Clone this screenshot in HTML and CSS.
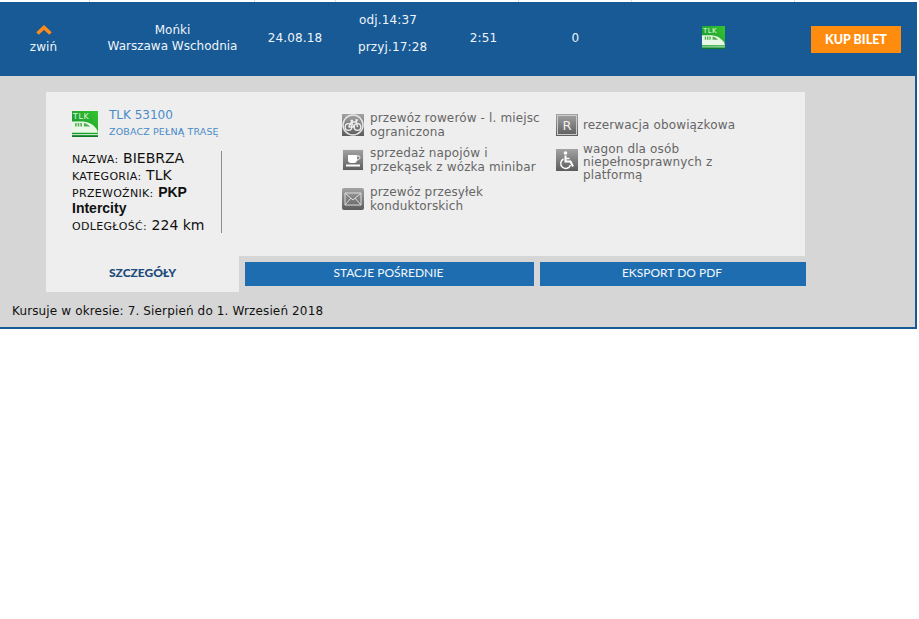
FILE: index.html
```html
<!DOCTYPE html>
<html lang="pl">
<head>
<meta charset="utf-8">
<title>Połączenie</title>
<link rel="stylesheet" href="styles.css">
</head>
<body>
<svg class="defs" width="0" height="0" aria-hidden="true">
  <defs>
    <linearGradient id="grey" x1="0" y1="0" x2="0" y2="1"><stop offset="0" stop-color="#a3a3a3"/><stop offset="1" stop-color="#5c5c5c"/></linearGradient>
    <linearGradient id="green" x1="1" y1="0" x2="0" y2="1"><stop offset="0" stop-color="#35c52f"/><stop offset="1" stop-color="#0f8f2e"/></linearGradient>
    <symbol id="tlk" viewBox="0 0 25 25">
      <rect width="25" height="25" fill="url(#green)"/>
      <text x="1" y="7.500" class="tlk-text">TLK</text>
      <path d="M0 10h10c6 0 12 4 14 8l1 3H0z" fill="#e9f7e6"/>
      <path d="M3 11.500h1.500v3.500H3zM5.500 11.500H7v3.500H5.500zM8 11.500h1.500v3.500H8z" fill="#4fb04f"/>
      <path d="M11.500 11.500c2.500 .5 4.500 2 6 3.500h-6z" fill="#4fb04f"/>
      <rect y="22.300" width="25" height="1.100" fill="#e9f7e6"/>
      <rect y="23.500" width="25" height="1.500" fill="#0c7a28"/>
    </symbol>
  </defs>
</svg>
<main class="connection">
  <div class="ticks"><i></i><i></i><i></i><i></i><i></i><i></i><i></i></div>
  <header class="summary">
    <div class="cell toggle">
      <svg class="chevron" width="16" height="11" viewBox="0 0 16 11"><path d="M1.500 8.500 8 2.500l6.500 6" fill="none" stroke="#ff8c1a" stroke-width="3.600"/></svg>
      <span>zwiń</span>
    </div>
    <div class="cell route"><span>Mońki</span><span>Warszawa Wschodnia</span></div>
    <div class="cell date">24.08.18</div>
    <div class="cell times"><span class="dep">odj.14:37</span><span>przyj.17:28</span></div>
    <div class="cell duration">2:51</div>
    <div class="cell zero">0</div>
    <div class="cell train-cell"><svg class="train-small"><use href="#tlk"/></svg></div>
    <div class="cell buy"><a class="buy-btn" href="#">KUP BILET</a></div>
  </header>
  <section class="details">
    <div class="panel">
      <div class="info">
        <div class="train-head">
          <svg class="train-big"><use href="#tlk"/></svg>
          <div class="train-links">
            <a class="train-no" href="#">TLK 53100</a>
            <a class="train-route" href="#">ZOBACZ PEŁNĄ TRASĘ</a>
          </div>
        </div>
        <div class="facts">
          <span class="lab">NAZWA:</span> <span class="val">BIEBRZA</span><br>
          <span class="lab">KATEGORIA:</span> <span class="val">TLK</span><br>
          <span class="lab">PRZEWOŹNIK:</span> <b class="val strong">PKP Intercity</b><br>
          <span class="lab">ODLEGŁOŚĆ:</span> <span class="val">224 km</span>
        </div>
      </div>
      <ul class="services col-a">
        <li class="svc">
          <svg class="ico" viewBox="0 0 22 22"><rect width="22" height="22" fill="url(#grey)"/><circle cx="11" cy="11" r="10" fill="none" stroke="#e6e6e6" stroke-width="1.500"/><g fill="none" stroke="#eee" stroke-width="1.300"><circle cx="6.500" cy="13" r="3.300"/><circle cx="15.500" cy="13" r="3.300"/><path d="M6.500 13 9.500 8h5l1 5M9.500 8l2.500 5h-5.500M8.500 6.500h2.500M14.500 8l-.5-2h2"/></g></svg>
          <span class="svc-text">przewóz rowerów - l. miejsc ograniczona</span>
        </li>
        <li class="svc">
          <svg class="ico" viewBox="0 0 22 22"><rect x=".5" y=".5" width="21" height="21" fill="url(#grey)" stroke="#e8e8e8"/><path d="M6 6h9v5c0 2-1 3-3 3H9c-2 0-3-1-3-3z" fill="#fff"/><path d="M15 7h2c1.500 0 1.500 4-2 4" fill="none" stroke="#fff"/><rect x="4" y="15.500" width="14" height="2" fill="#fff"/></svg>
          <span class="svc-text">sprzedaż napojów i przekąsek z wózka minibar</span>
        </li>
        <li class="svc svc-last">
          <svg class="ico" viewBox="0 0 22 22"><rect width="22" height="22" rx="2" fill="url(#grey)"/><path d="M3 5h16v12H3zM3 5l8 7 8-7M3 17l6-7M19 17l-6-7" fill="none" stroke="#ddd"/></svg>
          <span class="svc-text">przewóz przesyłek konduktorskich</span>
        </li>
      </ul>
      <ul class="services col-b">
        <li class="svc">
          <span class="ico r-ico">R</span>
          <span class="svc-text">rezerwacja obowiązkowa</span>
        </li>
        <li class="svc">
          <svg class="ico wheel" viewBox="0 0 22 22"><rect width="22" height="22" fill="url(#grey)"/><circle cx="9.500" cy="4" r="1.800" fill="#fff"/><path d="M9.500 6.500v6h5l2.500 5" fill="none" stroke="#fff" stroke-width="2"/><path d="M9.500 9.500h4" stroke="#fff" stroke-width="1.500"/><path d="M7.500 10a5 5 0 1 0 7 6" fill="none" stroke="#fff" stroke-width="1.400"/></svg>
          <span class="svc-text">wagon dla osób niepełnosprawnych z platformą</span>
        </li>
      </ul>
    </div>
    <nav class="tabs">
      <a class="tab active" href="#">SZCZEGÓŁY</a>
      <a class="tab wide" href="#">STACJE POŚREDNIE</a>
      <a class="tab" href="#">EKSPORT DO PDF</a>
    </nav>
    <p class="period">Kursuje w okresie: 7. Sierpień do 1. Wrzesień 2018</p>
  </section>
</main>
</body>
</html>
```
FILE: styles.css
```css
* { box-sizing: border-box; }
html, body { margin: 0; background: #fff; }
body { font-family: "DejaVu Sans", Verdana, sans-serif; font-size: 12px; letter-spacing: .14px; color: #111; }
a { text-decoration: none; color: inherit; }
ul { list-style: none; margin: 0; padding: 0; }
.defs { position: absolute; }
.tlk-text { font-family: "DejaVu Sans", sans-serif; font-size: 7.500px; letter-spacing: .6px; fill: #e9f7e6; }

.connection { width: 917px; }

.ticks, .summary { display: grid; }
.ticks { height: 2px; grid-template-columns: 90px 165px 81px 183px 113px 163px 122px; }
.ticks i { display: block; border-right: 1px solid #ddd; }
.ticks i:last-child { border-right: 0; }

.summary {
  height: 74px; background: #175a95; color: #f0f4fa;
  grid-template-columns: 89px 165px 81px 104px 79px 113px 163px 123px;
}
.cell { display: flex; flex-direction: column; align-items: center; justify-content: center; text-align: center; padding-bottom: 2px; }
.toggle { gap: 4px; padding: 1px 2px 0 0; }
.chevron { display: block; }
.route { gap: 3px; line-height: 13px; padding-left: 2px; letter-spacing: 0; }
.date { padding-left: 1px; }
.times { align-items: flex-start; padding: 0 0 12px 23px; gap: 13px; line-height: 14px; }
.dep { margin-left: 1px; }
.duration { padding-left: 10px; }
.zero { padding-left: 2px; }
.train-cell { padding: 0 0 4px 2px; }
.train-small { width: 23px; height: 23px; }
.buy { align-items: flex-start; padding: 0 0 0 17px; }
.buy-btn {
  display: flex; align-items: center; justify-content: center;
  width: 90px; height: 27px;
  background: #ff8c0e; color: #fff;
  font-family: Lato, sans-serif; font-weight: 900; font-size: 12.500px; letter-spacing: 0;
}

.details {
  height: 253px;
  background: #d6d6d6;
  border-right: 2px solid #175a95;
  border-bottom: 2px solid #175a95;
  padding: 16px 0 0 46px;
}
.panel {
  width: 759px; height: 164px;
  background: #eee;
  padding: 19px 0 0 26px;
  display: flex;
  align-items: flex-start;
}
.info { width: 150px; }
.train-head { display: flex; gap: 12px; height: 40px; }
.train-big { width: 26px; height: 26px; flex: none; }
.train-links { display: flex; flex-direction: column; gap: 2px; margin: -3px 0 0 -1px; }
.train-no { font-size: 12px; letter-spacing: 0; color: #4a8bc9; line-height: 15px; }
.train-route { font-size: 9.500px; color: #4a8bc9; line-height: 14px; white-space: nowrap; }
.facts { border-right: 1px solid #8c8c8c; height: 82px; font-size: 11px; line-height: 15.800px; color: #111; }
.lab { font-size: 11px; letter-spacing: .3px; line-height: 1; margin-right: 1px; }
.val { font-size: 14px; letter-spacing: 0; line-height: 1; }
.strong { font-family: "Liberation Sans", Arial, sans-serif; font-weight: 700; }

.services { display: flex; flex-direction: column; color: #666; line-height: 14px; }
.col-a { width: 214px; margin: 0 0 0 120px; gap: 7px; }
.col-a .svc-text { width: 174px; }
.svc-last { margin-top: 4px; }
.col-b { width: 190px; gap: 7px; margin-top: 3px; line-height: 13px; }
.svc { display: flex; gap: 6px; align-items: center; }
.col-b .svc { align-items: flex-start; gap: 5px; }
.col-b .svc:first-child { align-items: center; }
.wheel { margin-top: 6px; }
.ico { width: 22px; height: 22px; flex: none; }
.r-ico {
  display: flex; align-items: center; justify-content: center;
  background: linear-gradient(#a3a3a3, #5c5c5c);
  outline: 1px solid #ccc; outline-offset: -2px;
  color: #eee; font-size: 13px;
}
.svc-text { display: block; }

.tabs { display: flex; align-items: flex-start; width: 760px; gap: 6px; }
.tab {
  flex: 0 0 266px; height: 24px; margin-top: 6px; padding: 0 2px 3px 0;
  display: flex; align-items: center; justify-content: center;
  background: #1e6db0; color: #f4f8fc;
  font-family: Lato, sans-serif; font-size: 12px; letter-spacing: 0;
}
.tab.wide { flex-basis: 289px; }
.tab.active {
  flex: 0 0 193px; height: 36px; margin-top: 0; padding: 0 0 3px 0;
  background: #eee; color: #1c4a7a; font-weight: 900;
}
.period { margin: 10px 0 0 -34px; line-height: 18px; color: #111; }
```
